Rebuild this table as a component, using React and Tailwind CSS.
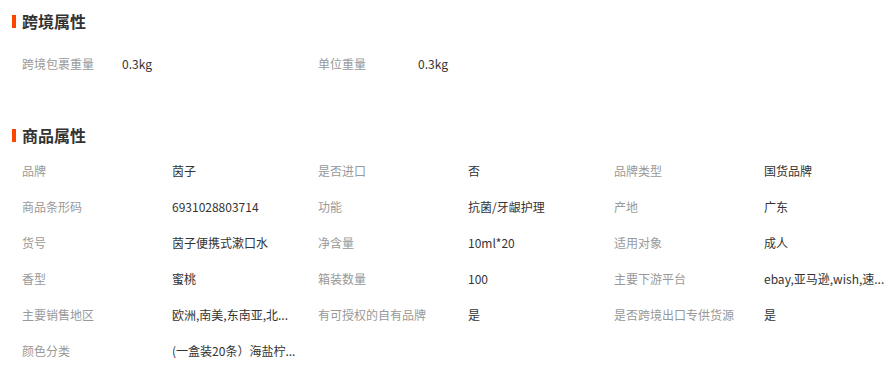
import React from 'react';

// Cross-border attributes: label column is narrower here
const crossBorder = [
  { label: '跨境包裹重量', value: '0.3kg' },
  { label: '单位重量', value: '0.3kg' },
];

// Product attributes, three pairs per row (long values come pre-shortened)
const productAttrs = [
  { label: '品牌', value: '茵子' },
  { label: '是否进口', value: '否' },
  { label: '品牌类型', value: '国货品牌' },
  { label: '商品条形码', value: '6931028803714' },
  { label: '功能', value: '抗菌/牙龈护理' },
  { label: '产地', value: '广东' },
  { label: '货号', value: '茵子便携式漱口水' },
  { label: '净含量', value: '10ml*20' },
  { label: '适用对象', value: '成人' },
  { label: '香型', value: '蜜桃' },
  { label: '箱装数量', value: '100' },
  { label: '主要下游平台', value: 'ebay,亚马逊,wish,速...' },
  { label: '主要销售地区', value: '欧洲,南美,东南亚,北...' },
  { label: '有可授权的自有品牌', value: '是' },
  { label: '是否跨境出口专供货源', value: '是' },
  { label: '颜色分类', value: '(一盒装20条）海盐柠...' },
];

const SectionTitle = ({ children, className = '' }) => (
  <div className={`flex items-center h-9 ${className}`}>
    <div className="w-1 h-[13px] bg-[#ff4400] mr-[6px]"></div>
    <h2 className="text-[16px] font-bold text-[#333]">{children}</h2>
  </div>
);

const App = () => {
  return (
    <div
      className="w-[895px] h-[368px] bg-white overflow-hidden pl-3 pt-[3px]"
      style={{ fontFamily: '"Noto Sans CJK SC", "Noto Sans", sans-serif' }}
    >
      <SectionTitle>跨境属性</SectionTitle>

      <div className="mt-[7px] pl-[10px] flex">
        {crossBorder.map(item => (
          <div key={item.label} className="flex items-center h-9 text-[12px]">
            <div className="w-[100px] text-[#999]">{item.label}</div>
            <div className="w-[196px] text-[#333]">{item.value}</div>
          </div>
        ))}
      </div>

      <SectionTitle className="mt-[35px]">商品属性</SectionTitle>

      <div className="pl-[10px] grid grid-cols-[296px_296px_280px]">
        {productAttrs.map(item => (
          <div key={item.label} className="flex items-center h-9 text-[12px]">
            <div className="w-[150px] shrink-0 text-[#999] whitespace-nowrap">{item.label}</div>
            <div className="text-[#333] whitespace-nowrap">{item.value}</div>
          </div>
        ))}
      </div>
    </div>
  );
};

export default App;
